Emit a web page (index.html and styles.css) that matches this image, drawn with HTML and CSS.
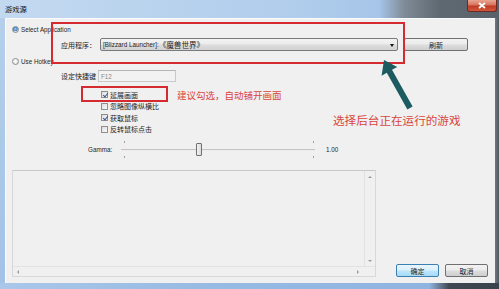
FILE: index.html
```html
<!DOCTYPE html>
<html lang="zh">
<head>
<meta charset="utf-8">
<title>游戏源</title>
<link rel="stylesheet" href="styles.css">
</head>
<body>
<div class="window">
  <div class="titlebar">
    <span class="title">游戏源</span>
    <div class="close"><svg width="8" height="7" viewBox="0 0 8 7"><path d="M1 1 L7 6 M7 1 L1 6" stroke="#fff" stroke-width="1.8"/></svg></div>
  </div>
  <div class="mid">
    <div class="frame-l"></div>
    <div class="client">
      <div class="row row-a">
        <span class="radio on"></span><span class="lat">Select Application</span>
      </div>
      <div class="row row-b">
        <span class="lbl cjk w39">应用程序：</span>
        <div class="combo"><span class="lat">[Blizzard Launcher]:</span><span class="cjk">《魔兽世界》</span><span class="arrow"></span></div>
        <div class="btn refresh cjk">刷新</div>
      </div>
      <div class="row row-c">
        <span class="radio"></span><span class="lat">Use Hotkey</span>
      </div>
      <div class="row row-d">
        <span class="lbl cjk w37">设定快捷键</span>
        <div class="textbox"><span class="lat grey">F12</span></div>
      </div>
      <div class="checks">
        <div class="check-row"><span class="cb on"></span><span class="cjk">延展画面</span></div>
        <div class="check-row"><span class="cb"></span><span class="cjk">忽略图像纵横比</span></div>
        <div class="check-row"><span class="cb on"></span><span class="cjk">获取鼠标</span></div>
        <div class="check-row"><span class="cb"></span><span class="cjk">反转鼠标点击</span></div>
      </div>
      <div class="row gamma">
        <span class="lat glabel">Gamma:</span>
        <div class="slider">
          <span class="tick t1"></span><span class="tick t2"></span><span class="tick t3"></span><span class="tick t4"></span>
          <div class="track"></div>
          <div class="thumb"></div>
        </div>
        <span class="lat gval">1.00</span>
      </div>
      <div class="bottom">
        <div class="listbox">
          <div class="lb-main">
            <div class="lb-area"></div>
            <div class="vscroll"><span class="sa up"></span><span class="sa down"></span></div>
          </div>
          <div class="hscroll"><span class="sa left"></span><span class="sa right"></span></div>
        </div>
        <div class="btn ok cjk">确定</div>
        <div class="btn cancel cjk">取消</div>
      </div>
    </div>
    <div class="frame-r"></div>
  </div>
  <div class="frame-b"></div>

  <div class="mark mark1"></div>
  <div class="mark mark2"></div>
  <div class="note note1">建议勾选，自动铺开画面</div>
  <div class="note note2">选择后台正在运行的游戏</div>
  <svg class="pointer" width="60" height="70" viewBox="370 50 60 70">
    <polygon points="384,60 397.2,66.9 392,69.8 412.6,106.5 407.4,109.5 386.8,72.8 381.6,75.7" fill="#1c5b60"/>
  </svg>
</div>
</body>
</html>
```
FILE: styles.css
```css
* { box-sizing: border-box; }
html, body { margin: 0; padding: 0; }
body {
  width: 499px; height: 289px; overflow: hidden;
  font-family: "Liberation Sans", Arial, "Noto Sans CJK SC", sans-serif;
  color: #1e1e1e;
}
.window {
  position: relative;
  width: 499px; height: 289px;
  display: flex; flex-direction: column;
}
.titlebar {
  height: 18px;
  display: flex; align-items: flex-start;
  background: linear-gradient(to right, #c3d9f0 0, #b0cdec 60%, #a6c5e8 76%, #7f8b97 81%, #5f6972 88%, #59626b 100%);
}
.title {
  font-family: "Noto Sans CJK SC", sans-serif;
  font-size: 7.3px; line-height: 18px;
  margin-left: 5px; color: #111;
}
.close {
  margin-left: auto; margin-right: 2px;
  width: 30px; height: 12px;
  border: 1px solid #6e2a22; border-top: none;
  border-radius: 0 0 3px 3px;
  background: linear-gradient(#e9a592 0, #d7735e 45%, #c03a22 55%, #d0583c 100%);
  display: flex; align-items: center; justify-content: center;
}
.mid { display: flex; height: 265px; }
.frame-l { width: 5px; background: linear-gradient(#b5cfeb, #a3c2e6); }
.frame-r { width: 4px; background: linear-gradient(to right, #6f7780, #4f575f); }
.frame-b {
  height: 6px;
  background: linear-gradient(to right, #a9c7e9 0, #98bbe3 40%, #8fb4e0 86%, #3f4852 90%, #3a424b 100%);
}
.client {
  position: relative;
  width: 490px; height: 265px;
  background: #f0f0f0;
  border-top: 1px solid #fbfbfb;
  border-left: 1px solid #fbfbfb;
  padding-top: 5px;
  font-size: 7px;
}
.lat { font-family: "Liberation Sans", Arial, sans-serif; font-size: 6.3px; white-space: nowrap; }
.cjk { font-family: "Noto Sans CJK SC", sans-serif; font-size: 7px; white-space: nowrap; }
.row { display: flex; align-items: center; }
.row-a { height: 10px; padding-left: 6px; gap: 2px; }
.row-c { height: 10px; padding-left: 6px; gap: 2px; margin-top: 5px; }
.radio {
  width: 7px; height: 7px; border-radius: 50%;
  border: 1px solid #8d8d8d;
  background: radial-gradient(circle at 40% 35%, #fff, #dcdcdc);
  flex: none;
}
.radio.on { background: radial-gradient(circle at 45% 40%, #9ed2f5 0, #3a79bf 55%, #dcdcdc 60%); }
.row-b { height: 13px; margin-top: 4px; padding-left: 55px; }
.lbl { display: block; }
.w39 { width: 39px; }
.w37 { width: 37px; }
.combo {
  position: relative;
  width: 298px; height: 13px;
  border: 1px solid #7a7a7a; border-radius: 2px;
  background: linear-gradient(#f4f4f4 0, #ebebeb 48%, #dddddd 52%, #d2d2d2 100%);
  display: flex; align-items: center; padding-left: 2px;
}
.combo .cjk { font-size: 7.6px; }
.arrow {
  position: absolute; right: 3px; top: 5px;
  width: 0; height: 0;
  border-left: 2.5px solid transparent; border-right: 2.5px solid transparent;
  border-top: 3px solid #111;
}
.btn {
  height: 13px;
  border: 1px solid #707070; border-radius: 2px;
  background: linear-gradient(#f2f2f2 0, #ebebeb 48%, #dddddd 52%, #cfcfcf 100%);
  display: flex; align-items: center; justify-content: center;
}
.refresh { width: 64px; margin-left: 6px; }
.row-d { height: 12px; margin-top: 4px; padding-left: 55px; }
.textbox {
  width: 78px; height: 12px;
  border: 1px solid #c9c9c9; border-top-color: #b5b5b5;
  background: #f2f2f2;
  display: flex; align-items: center; padding-left: 2px;
}
.grey { color: #8a8a8a; }
.checks { margin-top: 7px; padding-left: 95px; }
.check-row { height: 11.5px; display: flex; align-items: center; gap: 2px; }
.cb {
  position: relative;
  width: 7px; height: 7px; flex: none;
  border: 1px solid #8e8f8f;
  background: linear-gradient(135deg, #dcdcdc, #fbfbfb);
}
.cb.on::after {
  content: ""; position: absolute;
  left: 1.5px; top: 0px; width: 2px; height: 4px;
  border-right: 1.2px solid #3e558f; border-bottom: 1.2px solid #3e558f;
  transform: rotate(40deg);
}
.gamma { height: 17px; margin-top: 6px; padding-left: 82px; }
.glabel { width: 33px; }
.slider { position: relative; width: 194px; height: 17px; }
.track {
  position: absolute; left: 0; right: 0; top: 8px; height: 2px;
  background: #eceeee; border-top: 1px solid #c4c4c4;
}
.thumb {
  position: absolute; left: 75px; top: 2px;
  width: 6px; height: 13px;
  border: 1px solid #707070; border-radius: 1px;
  background: linear-gradient(to right, #f3f3f3, #dadada);
}
.tick { position: absolute; width: 1px; height: 2px; background: #a0a0a0; }
.t1 { left: 3px; top: 0; }
.t2 { left: 3px; bottom: 0; }
.t3 { right: 1px; top: 0; }
.t4 { right: 1px; bottom: 0; }
.gval { margin-left: 11px; }
.bottom { display: flex; align-items: flex-end; margin-top: 12px; padding-left: 6px; }
.listbox {
  width: 364px; height: 107px;
  border: 1px solid #d8d8d8; border-top-color: #c8c8c8;
  background: #f0f0f0;
  display: flex; flex-direction: column;
}
.lb-main { flex: 1; display: flex; }
.lb-area { flex: 1; border-right: 1px solid #e2e2e2; }
.vscroll {
  width: 10px; display: flex; flex-direction: column; justify-content: space-between;
  align-items: center; padding: 5px 0 4px;
}
.hscroll {
  height: 10px; border-top: 1px solid #e2e2e2;
  display: flex; justify-content: space-between; align-items: center;
  padding: 0 16px 0 4px;
}
.sa { width: 0; height: 0; }
.up { border-left: 2px solid transparent; border-right: 2px solid transparent; border-bottom: 2px solid #9a9a9a; }
.down { border-left: 2px solid transparent; border-right: 2px solid transparent; border-top: 2px solid #9a9a9a; }
.left { border-top: 2px solid transparent; border-bottom: 2px solid transparent; border-right: 2px solid #9a9a9a; }
.right { border-top: 2px solid transparent; border-bottom: 2px solid transparent; border-left: 2px solid #9a9a9a; }
.ok {
  width: 43px; margin-left: 20px;
  border-color: #3c7fb1;
  background: linear-gradient(#eaf6fd 0, #d9f0fc 48%, #bee6fd 52%, #a7d9f5 100%);
}
.cancel { width: 43px; margin-left: 6px; }
.mark { position: absolute; border: 2px solid #d42a30; }
.mark1 { left: 51px; top: 22px; width: 354px; height: 42px; }
.mark2 { left: 81px; top: 86px; width: 87px; height: 16px; }
.note {
  position: absolute; color: #d9453b;
  font-family: "Noto Sans CJK SC", sans-serif; white-space: nowrap;
}
.note1 { left: 177px; top: 89px; font-size: 9.5px; line-height: 12px; }
.note2 { left: 333px; top: 113px; font-size: 11.6px; line-height: 15px; }
.pointer { position: absolute; left: 370px; top: 50px; }
```
